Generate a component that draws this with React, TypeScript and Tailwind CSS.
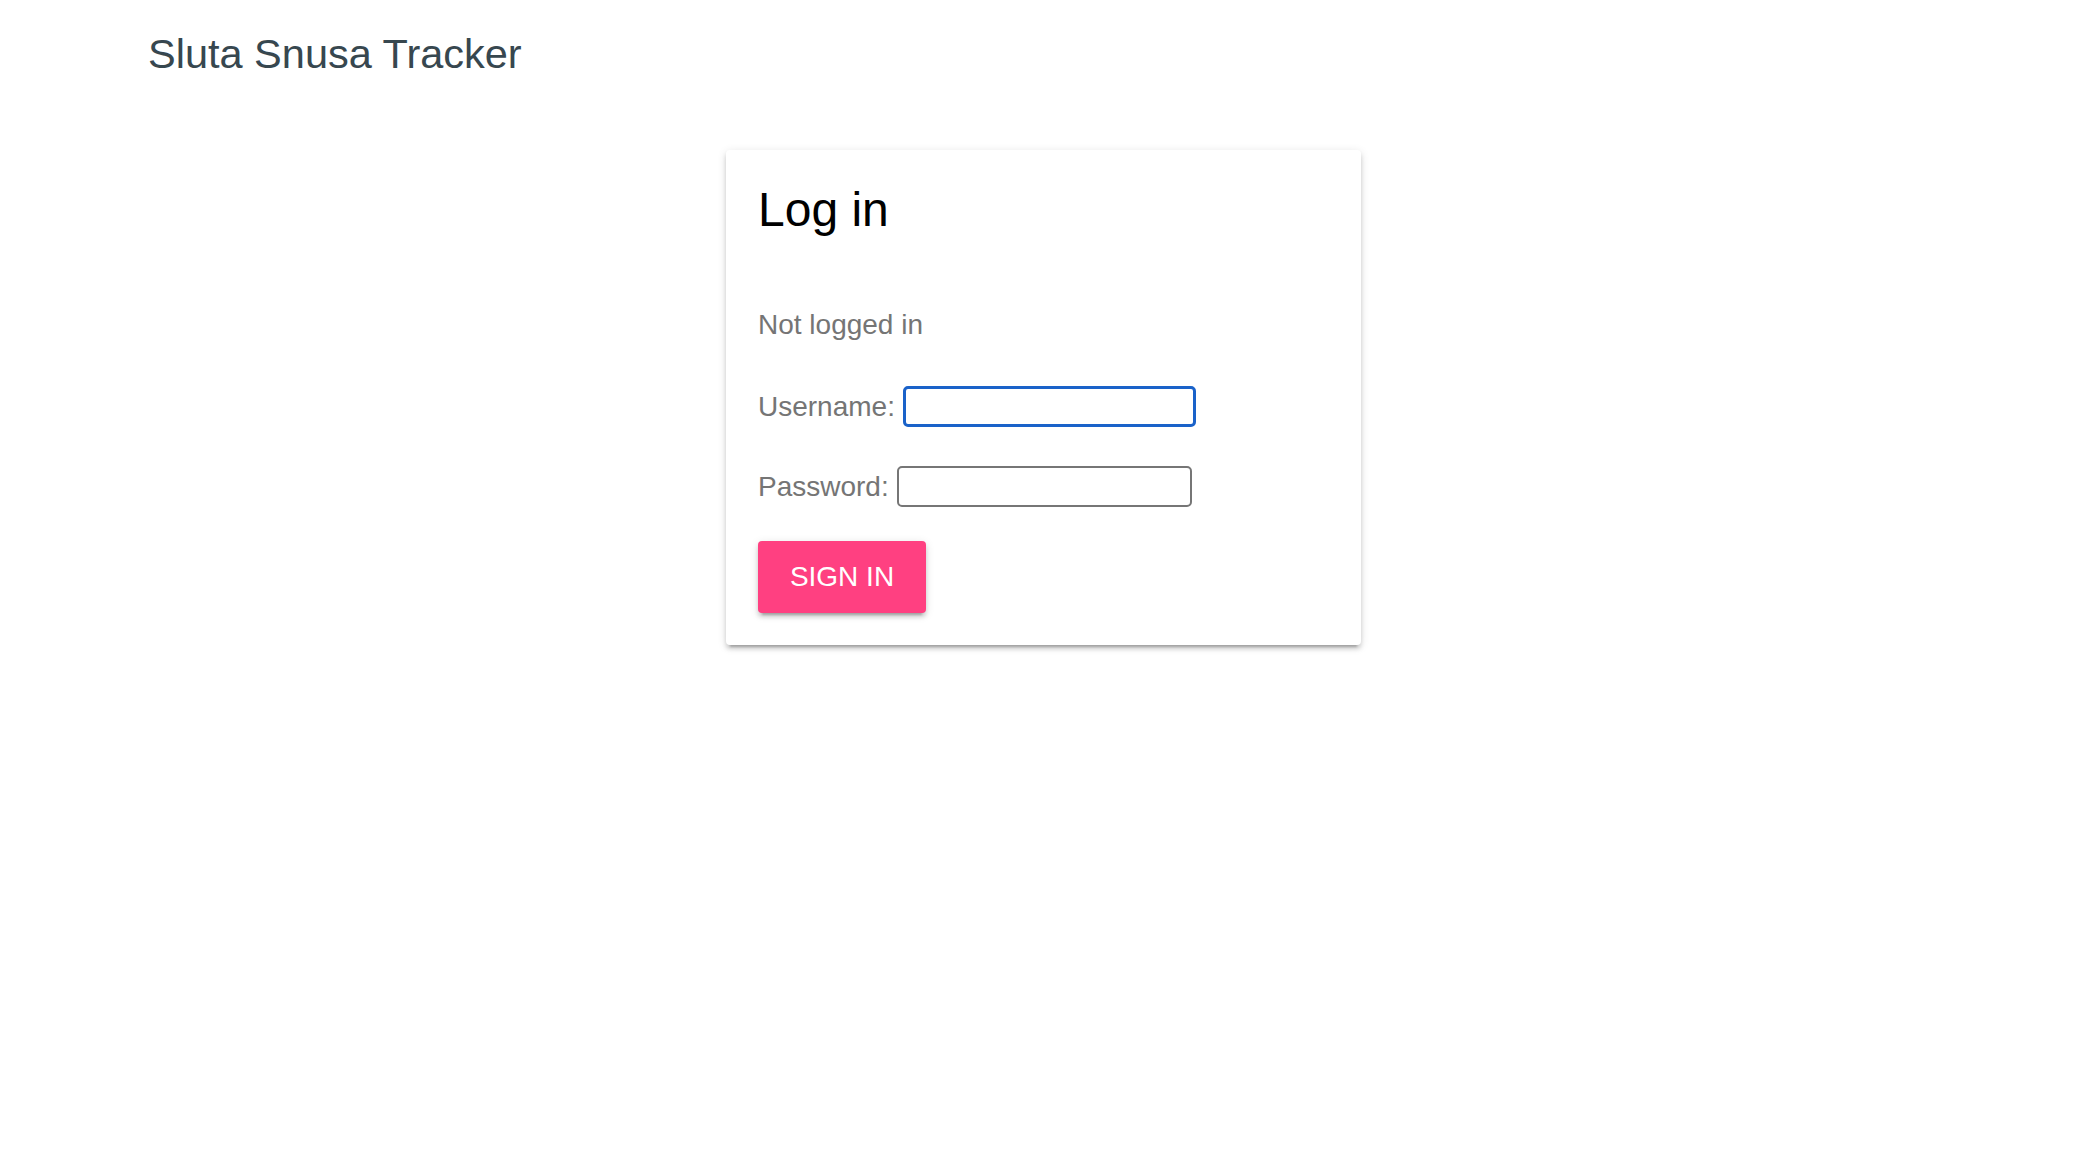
import { useState } from "react";

export default function App() {
  const [username, setUsername] = useState("");
  const [password, setPassword] = useState("");

  return (
    <div className="min-h-[1158px] w-full bg-white font-['Liberation_Sans',Arial,sans-serif]">
      {/* Header */}
      <header className="pl-[148px] pt-[22px]">
        <h1 className="text-[41.5px] leading-[64px] font-normal text-[#37474f]">Sluta Snusa Tracker</h1>
      </header>

      {/* Login card */}
      <div className="ml-[726px] mt-[64px] w-[635px] rounded-[4px] bg-white px-8 pt-[36px] pb-8 shadow-[0_4px_4px_0_rgba(0,0,0,0.14),0_6px_2px_-4px_rgba(0,0,0,0.2),0_2px_10px_0_rgba(0,0,0,0.12)]">
        <h2 className="text-[48px] leading-[48px] font-normal text-black">Log in</h2>

        <div className="mt-[71px] flex flex-col text-[28px] text-[#757575]">
          <p className="leading-[40px]">Not logged in</p>

          <div className="mt-[41px] flex h-[41px] items-center">
            <label htmlFor="username" className="leading-[41px]">Username:</label>
            <input
              id="username"
              value={username}
              onChange={(e) => setUsername(e.target.value)}
              className="ml-2 h-[41px] w-[293px] rounded-[5px] border-[3.5px] border-[#1a62c9] bg-white px-1 text-[26px] text-black outline-none"
            />
          </div>

          <div className="mt-[39px] flex h-[41px] items-center">
            <label htmlFor="password" className="leading-[41px]">Password:</label>
            <input
              id="password"
              type="password"
              value={password}
              onChange={(e) => setPassword(e.target.value)}
              className="ml-2 h-[41px] w-[295px] rounded-[5px] border-2 border-[#767676] bg-white px-1 text-[26px] text-black outline-none"
            />
          </div>
        </div>

        <button
          type="button"
          className="mt-[34px] h-[72px] w-[168px] rounded-[4px] bg-[#ff4081] text-[28px] font-medium tracking-normal text-white shadow-[0_4px_4px_0_rgba(0,0,0,0.14),0_6px_2px_-4px_rgba(0,0,0,0.2),0_2px_10px_0_rgba(0,0,0,0.12)]"
        >
          SIGN IN
        </button>
      </div>
    </div>
  );
}
